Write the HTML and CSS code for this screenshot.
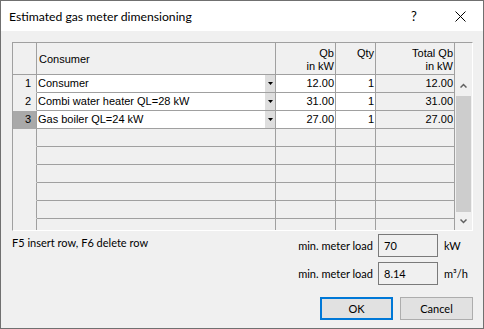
FILE: index.html
```html
<!DOCTYPE html>
<html lang="en">
<head>
    <meta charset="UTF-8">
    <title>Estimated gas meter dimensioning</title>
    <link rel="stylesheet" href="styles.css">
</head>
<body>
    <div class="window">
        <div class="titlebar">
            <span class="title">Estimated gas meter dimensioning</span>
            <span class="caption-btn">?</span>
            <span class="caption-btn">
                <svg width="11" height="11" viewBox="0 0 11 11"><path d="M0.5 0.5L10.5 10.5M10.5 0.5L0.5 10.5" stroke="#000" stroke-width="1"/></svg>
            </span>
        </div>

        <div class="body">
            <!-- Consumer grid -->
            <div class="grid">
                <div class="table">
                    <div class="row head">
                        <div class="cell rh"></div>
                        <div class="cell hl">Consumer</div>
                        <div class="cell num">Qb<br>in kW</div>
                        <div class="cell num">Qty<br>&nbsp;</div>
                        <div class="cell num">Total Qb<br>in kW</div>
                    </div>
                    <div class="row">
                        <div class="cell rh">1</div>
                        <div class="cell edit combo"><span class="txt">Consumer</span><span class="drop"><svg width="5" height="3"><polygon points="0,0 5,0 2.5,3" fill="#000"/></svg></span></div>
                        <div class="cell edit num">12.00</div>
                        <div class="cell edit num">1</div>
                        <div class="cell num">12.00</div>
                    </div>
                    <div class="row">
                        <div class="cell rh">2</div>
                        <div class="cell edit combo"><span class="txt">Combi water heater QL=28 kW</span><span class="drop"><svg width="5" height="3"><polygon points="0,0 5,0 2.5,3" fill="#000"/></svg></span></div>
                        <div class="cell edit num">31.00</div>
                        <div class="cell edit num">1</div>
                        <div class="cell num">31.00</div>
                    </div>
                    <div class="row">
                        <div class="cell rh current">3</div>
                        <div class="cell edit combo"><span class="txt">Gas boiler QL=24 kW</span><span class="drop"><svg width="5" height="3"><polygon points="0,0 5,0 2.5,3" fill="#000"/></svg></span></div>
                        <div class="cell edit num">27.00</div>
                        <div class="cell edit num">1</div>
                        <div class="cell num">27.00</div>
                    </div>
                    <div class="row"><div class="cell rh"></div><div class="cell"></div><div class="cell"></div><div class="cell"></div><div class="cell"></div></div>
                    <div class="row"><div class="cell rh"></div><div class="cell"></div><div class="cell"></div><div class="cell"></div><div class="cell"></div></div>
                    <div class="row"><div class="cell rh"></div><div class="cell"></div><div class="cell"></div><div class="cell"></div><div class="cell"></div></div>
                    <div class="row"><div class="cell rh"></div><div class="cell"></div><div class="cell"></div><div class="cell"></div><div class="cell"></div></div>
                    <div class="row"><div class="cell rh"></div><div class="cell"></div><div class="cell"></div><div class="cell"></div><div class="cell"></div></div>
                    <div class="row"><div class="cell rh"></div><div class="cell"></div><div class="cell"></div><div class="cell"></div><div class="cell"></div></div>
                </div>
                <div class="scrollbar">
                    <div class="sb-head"></div>
                    <div class="sb-btn sb-up"><svg width="7" height="5"><polyline points="0.5,4.5 3.5,1.5 6.5,4.5" fill="none" stroke="#606060" stroke-width="1.5"/></svg></div>
                    <div class="sb-thumb"></div>
                    <div class="sb-btn sb-down"><svg width="7" height="5"><polyline points="0.5,0.5 3.5,3.5 6.5,0.5" fill="none" stroke="#606060" stroke-width="1.5"/></svg></div>
                </div>
            </div>

            <!-- Hint and results -->
            <div class="footer">
                <div class="hint">F5 insert row, F6 delete row</div>
                <div class="fields">
                    <div class="field">
                        <span class="label">min. meter load</span>
                        <span class="box">70</span>
                        <span class="unit">kW</span>
                    </div>
                    <div class="field">
                        <span class="label">min. meter load</span>
                        <span class="box">8.14</span>
                        <span class="unit">m³/h</span>
                    </div>
                </div>
            </div>

            <div class="buttons">
                <button class="btn default">OK</button>
                <button class="btn">Cancel</button>
            </div>
        </div>
    </div>
</body>
</html>
```

FILE: styles.css
```css
body {
    margin: 0;
    background-color: #fff;
    font-family: Lato, "Noto Sans", sans-serif;
    font-size: 11px;
    color: #000;
}

.window {
    width: 484px;
    height: 329px;
    box-sizing: border-box;
    border: 1px solid #707070;
    background-color: #f0f0f0;
}

.titlebar {
    height: 30px;
    background-color: #fff;
    display: flex;
    align-items: center;
    font-size: 12.2px;
}

.title {
    flex: 1;
    padding-left: 8px;
}

.caption-btn {
    width: 46px;
    height: 30px;
    display: flex;
    align-items: center;
    justify-content: center;
    font-size: 13px;
}

.body {
    padding: 11px 10px 0 11px;
}

/* grid */
.grid {
    display: flex;
    width: 461px;
    height: 189px;
    box-sizing: border-box;
    border: 1px solid;
    border-color: #a0a0a0 #fff #fff #a0a0a0;
}

.table {
    width: 442px;
    height: 187px;
    overflow: hidden;
    font-family: "Liberation Sans", Arial, sans-serif;
    font-size: 11px;
    line-height: 13px;
}

.row {
    display: grid;
    grid-template-columns: 24px 239px 60px 40px 79px;
    height: 18px;
}

.row.head {
    height: 32px;
}

.cell {
    box-sizing: border-box;
    border-right: 1px solid #a0a0a0;
    border-bottom: 1px solid #a0a0a0;
    padding: 0 1px;
    display: flex;
    align-items: center;
    white-space: nowrap;
    overflow: hidden;
}

.head .cell {
    padding-top: 2px;
}

.head .hl {
    padding-left: 2px;
}

.num {
    justify-content: flex-end;
    text-align: right;
}

.rh {
    border-bottom-color: transparent;
    justify-content: flex-end;
    padding-right: 5px;
}

.head .rh {
    border-bottom-color: #a0a0a0;
}

.rh.current {
    background-color: #a9a9a9;
}

.edit {
    background-color: #fff;
}

.combo {
    padding-right: 0;
}

.combo .txt {
    flex: 1;
}

.drop {
    width: 10px;
    align-self: stretch;
    background-color: #dedede;
    display: flex;
    align-items: center;
    justify-content: center;
}

/* scrollbar */
.scrollbar {
    width: 17px;
    display: flex;
    flex-direction: column;
}

.sb-head {
    height: 32px;
}

.sb-btn {
    display: flex;
    align-items: center;
    justify-content: center;
}

.sb-up {
    height: 21px;
}

.sb-down {
    height: 18px;
}

.sb-thumb {
    flex: 1;
    margin: 0 1px;
    background-color: #cdcdcd;
}

/* footer */
.footer {
    display: flex;
    margin-top: 3px;
}

.hint {
    flex: 1;
    padding-top: 1px;
    line-height: 16px;
}

.fields {
    display: flex;
    flex-direction: column;
    gap: 5px;
}

.field {
    display: flex;
    align-items: center;
    height: 23px;
}

.label {
    margin-right: 5px;
}

.box {
    width: 60px;
    height: 23px;
    box-sizing: border-box;
    border: 1px solid #7a7a7a;
    padding-left: 5px;
    display: flex;
    align-items: center;
}

.unit {
    width: 29px;
    margin-left: 6px;
}

.buttons {
    display: flex;
    justify-content: flex-end;
    gap: 7px;
    margin-top: 12px;
}

.btn {
    width: 73px;
    height: 23px;
    box-sizing: border-box;
    border: 1px solid #adadad;
    background-color: #e1e1e1;
    font-family: Lato, "Noto Sans", sans-serif;
    font-size: 11px;
    color: #000;
    padding: 0;
}

.btn.default {
    border: 2px solid #0078d7;
}
```
